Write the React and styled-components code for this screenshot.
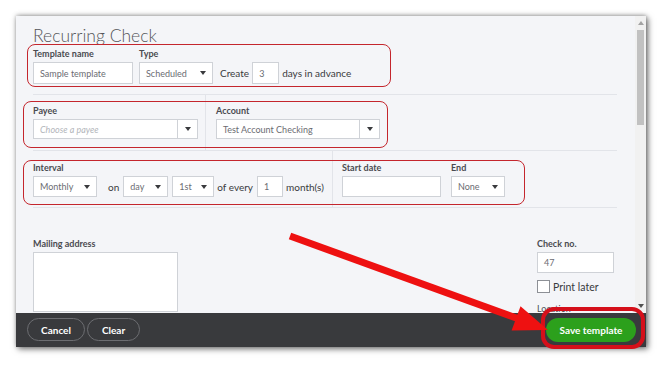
import React from 'react';
import styled, { createGlobalStyle } from 'styled-components';

const Global = createGlobalStyle`
  html, body { margin: 0; padding: 0; background: #ffffff; }
  body { font-family: Lato, "Open Sans", sans-serif; color: #393a3d; }
  * { box-sizing: border-box; }
`;

const Page = styled.div`
  position: relative;
  width: 662px;
  height: 366px;
  padding: 16px 0 0 16px;
  overflow: hidden;
`;

const Window = styled.div`
  width: 630px;
  height: 331px;
  display: flex;
  flex-direction: column;
  background: #f4f5f8;
  box-shadow: 2px 2px 6px rgba(0, 0, 0, 0.55), 0 -1px 4px rgba(0, 0, 0, 0.25);
`;

const Body = styled.div`
  flex: 1;
  display: flex;
  min-height: 0;
`;

const Content = styled.div`
  flex: 1;
  overflow: hidden;
  padding: 8px 18px 0 17px;
`;

const Title = styled.h1`
  margin: 0;
  height: 20px;
  padding-top: 2px;
  line-height: 20px;
  font-size: 17.5px;
  font-weight: 300;
  color: #55565a;
`;

const Section = styled.div`
  display: flex;
  align-items: ${(p) => (p.$stretch ? 'stretch' : 'flex-end')};
  gap: ${(p) => p.$gap || 0}px;
  padding: ${(p) => p.$pad || '0'};
  border-bottom: 1px solid #e2e4e9;
`;

const Group = styled.div`
  display: flex;
  align-items: flex-end;
  gap: ${(p) => p.$gap || 0}px;
  width: ${(p) => (p.$w ? `${p.$w}px` : 'auto')};
  padding: ${(p) => p.$pad || '0'};
  border-left: ${(p) => (p.$divider ? '1px solid #e2e4e9' : 'none')};
`;

const Field = styled.div`
  display: flex;
  flex-direction: column;
  gap: 3px;
`;

const Label = styled.label`
  font-size: 9px;
  line-height: 11px;
  font-weight: 700;
  color: #4a4b50;
  white-space: nowrap;
`;

const Inline = styled.div`
  display: flex;
  align-items: center;
  height: ${(p) => p.$h}px;
`;

const Text = styled.span`
  font-size: 10px;
  color: #393a3d;
  white-space: nowrap;
  margin: ${(p) => p.$m || '0'};
`;

const Box = styled.div`
  display: flex;
  align-items: center;
  width: ${(p) => p.$w}px;
  height: ${(p) => p.$h}px;
  background: #ffffff;
  border: 1px solid #cfd2d7;
  font-size: 9px;
  color: ${(p) => (p.$placeholder ? '#b3b6bb' : '#6b6c72')};
  font-style: ${(p) => (p.$placeholder ? 'italic' : 'normal')};
  padding-left: 6px;
  white-space: nowrap;
  flex-shrink: 0;
`;

const BoxText = styled.span`
  flex: 1;
`;

const Caret = styled.span`
  display: flex;
  align-items: center;
  justify-content: center;
  width: ${(p) => p.$w || 18}px;
  height: 100%;
  border-left: ${(p) => (p.$split ? '1px solid #cfd2d7' : 'none')};
`;

const Tri = ({ down = true, color = '#393a3d' }) => (
  <svg width="6" height="4" viewBox="0 0 6 4">
    <polygon points={down ? '0,0 6,0 3,4' : '0,4 6,4 3,0'} fill={color} />
  </svg>
);

const Select = ({ w, h, children, split, caretW, placeholder }) => (
  <Box $w={w} $h={h} $placeholder={placeholder}>
    <BoxText>{children}</BoxText>
    <Caret $split={split} $w={caretW}>
      <Tri />
    </Caret>
  </Box>
);

const Lower = styled.div`
  display: flex;
  justify-content: space-between;
  padding-top: 30px;
`;

const TextArea = styled.div`
  width: 145px;
  height: 60px;
  background: #ffffff;
  border: 1px solid #cfd2d7;
`;

const CheckCol = styled.div`
  width: 80px;
  display: flex;
  flex-direction: column;
`;

const CheckRow = styled.div`
  display: flex;
  align-items: center;
  gap: 3px;
  margin-top: 7px;
`;

const CheckBox = styled.span`
  width: 13px;
  height: 13px;
  background: #ffffff;
  border: 1px solid #8d9096;
`;

const PrintText = styled.span`
  font-size: 10.5px;
  color: #393a3d;
`;

const LocLabel = styled(Label)`
  margin-top: 10px;
  font-weight: 400;
`;

const Scrollbar = styled.div`
  width: 11px;
  background: #f1f1f1;
  display: flex;
  flex-direction: column;
  align-items: center;
`;

const ScrollArrow = styled.div`
  height: 14px;
  display: flex;
  align-items: center;
  justify-content: center;
`;

const Thumb = styled.div`
  width: 7px;
  height: 95px;
  background: #c1c1c1;
`;

const Spacer = styled.div`
  flex: 1;
`;

const Footer = styled.div`
  height: 34px;
  background: #393a3d;
  display: flex;
  align-items: center;
  padding: 0 10px 1px 11px;
  gap: 2px;
`;

const PillButton = styled.button`
  height: ${(p) => (p.$primary ? 24 : 23)}px;
  width: ${(p) => p.$w}px;
  margin-left: ${(p) => (p.$push ? 'auto' : '0')};
  border-radius: 12px;
  border: ${(p) => (p.$primary ? 'none' : '1px solid #6c6d71')};
  background: ${(p) => (p.$primary ? '#2ca01c' : 'transparent')};
  color: #ffffff;
  font-family: Lato, "Open Sans", sans-serif;
  font-size: 10px;
  font-weight: 700;
  padding: 0;
`;

const RedBox = styled.div`
  position: absolute;
  left: ${(p) => p.$x}px;
  top: ${(p) => p.$y}px;
  width: ${(p) => p.$w}px;
  height: ${(p) => p.$h}px;
  border: ${(p) => p.$t || 1.5}px solid ${(p) => p.$c || '#c4262d'};
  border-radius: ${(p) => p.$r || 8}px;
  pointer-events: none;
`;

const Overlay = styled.svg`
  position: absolute;
  left: 0;
  top: 0;
  pointer-events: none;
`;

export default function App() {
  return (
    <Page>
      <Global />
      <Window>
        <Body>
          <Content>
            <Title>Recurring Check</Title>
            <Section $pad="4px 0 10px 0" $gap={6}>
              <Field>
                <Label>Template name</Label>
                <Box $w={100} $h={22}>Sample template</Box>
              </Field>
              <Field>
                <Label>Type</Label>
                <Select w={74} h={22}>Scheduled</Select>
              </Field>
              <Inline $h={22}>
                <Text $m="0 3px 0 1px">Create</Text>
                <Box $w={27} $h={22}>3</Box>
                <Text $m="0 0 0 3px">days in advance</Text>
              </Inline>
            </Section>
            <Section $stretch>
              <Group $w={172} $pad="10px 0 11px 0">
                <Field>
                  <Label>Payee</Label>
                  <Select w={165} h={20} split caretW={20} placeholder>
                    Choose a payee
                  </Select>
                </Field>
              </Group>
              <Group $divider $pad="10px 0 11px 10px">
                <Field>
                  <Label>Account</Label>
                  <Select w={164} h={20} split caretW={20}>
                    Test Account Checking
                  </Select>
                </Field>
              </Group>
            </Section>
            <Section $stretch>
              <Group $w={299} $pad="11px 0 10px 0">
                <Field>
                  <Label>Interval</Label>
                  <Select w={64} h={21}>Monthly</Select>
                </Field>
                <Inline $h={21}>
                  <Text $m="0 4px 0 11px">on</Text>
                  <Select w={45} h={21}>day</Select>
                  <Text $m="0 0 0 4px" />
                  <Select w={42} h={21}>1st</Select>
                  <Text $m="0 4px 0 3px">of every</Text>
                  <Box $w={26} $h={21}>1</Box>
                  <Text $m="0 0 0 3px">month(s)</Text>
                </Inline>
              </Group>
              <Group $divider $gap={10} $pad="11px 0 10px 9px">
                <Field>
                  <Label>Start date</Label>
                  <Box $w={99} $h={21} />
                </Field>
                <Field>
                  <Label>End</Label>
                  <Select w={54} h={21}>None</Select>
                </Field>
              </Group>
            </Section>
            <Lower>
              <Field>
                <Label>Mailing address</Label>
                <TextArea />
              </Field>
              <CheckCol>
                <Field>
                  <Label>Check no.</Label>
                  <Box $w={77} $h={21}>47</Box>
                </Field>
                <CheckRow>
                  <CheckBox />
                  <PrintText>Print later</PrintText>
                </CheckRow>
                <LocLabel>Location</LocLabel>
              </CheckCol>
            </Lower>
          </Content>
          <Scrollbar>
            <ScrollArrow>
              <Tri down={false} color="#a3a3a3" />
            </ScrollArrow>
            <Thumb />
            <Spacer />
            <ScrollArrow>
              <Tri color="#505050" />
            </ScrollArrow>
          </Scrollbar>
        </Body>
        <Footer>
          <PillButton $w={58}>Cancel</PillButton>
          <PillButton $w={53}>Clear</PillButton>
          <PillButton $primary $push $w={90}>Save template</PillButton>
        </Footer>
      </Window>

      <RedBox $x={27} $y={44} $w={364} $h={43} />
      <RedBox $x={23} $y={101} $w={365} $h={47} />
      <RedBox $x={23} $y={160} $w={502} $h={45} />
      <RedBox $x={541} $y={307} $w={104} $h={42} $t={4} $r={13} $c="#d50f1a" />

      <Overlay width="662" height="366" viewBox="0 0 662 366">
        <line x1="290" y1="236" x2="519" y2="319" stroke="#ee1111" strokeWidth="7" />
        <polygon points="548,330 511.6,330.6 520.5,306.2" fill="#ee1111" />
      </Overlay>
    </Page>
  );
}
